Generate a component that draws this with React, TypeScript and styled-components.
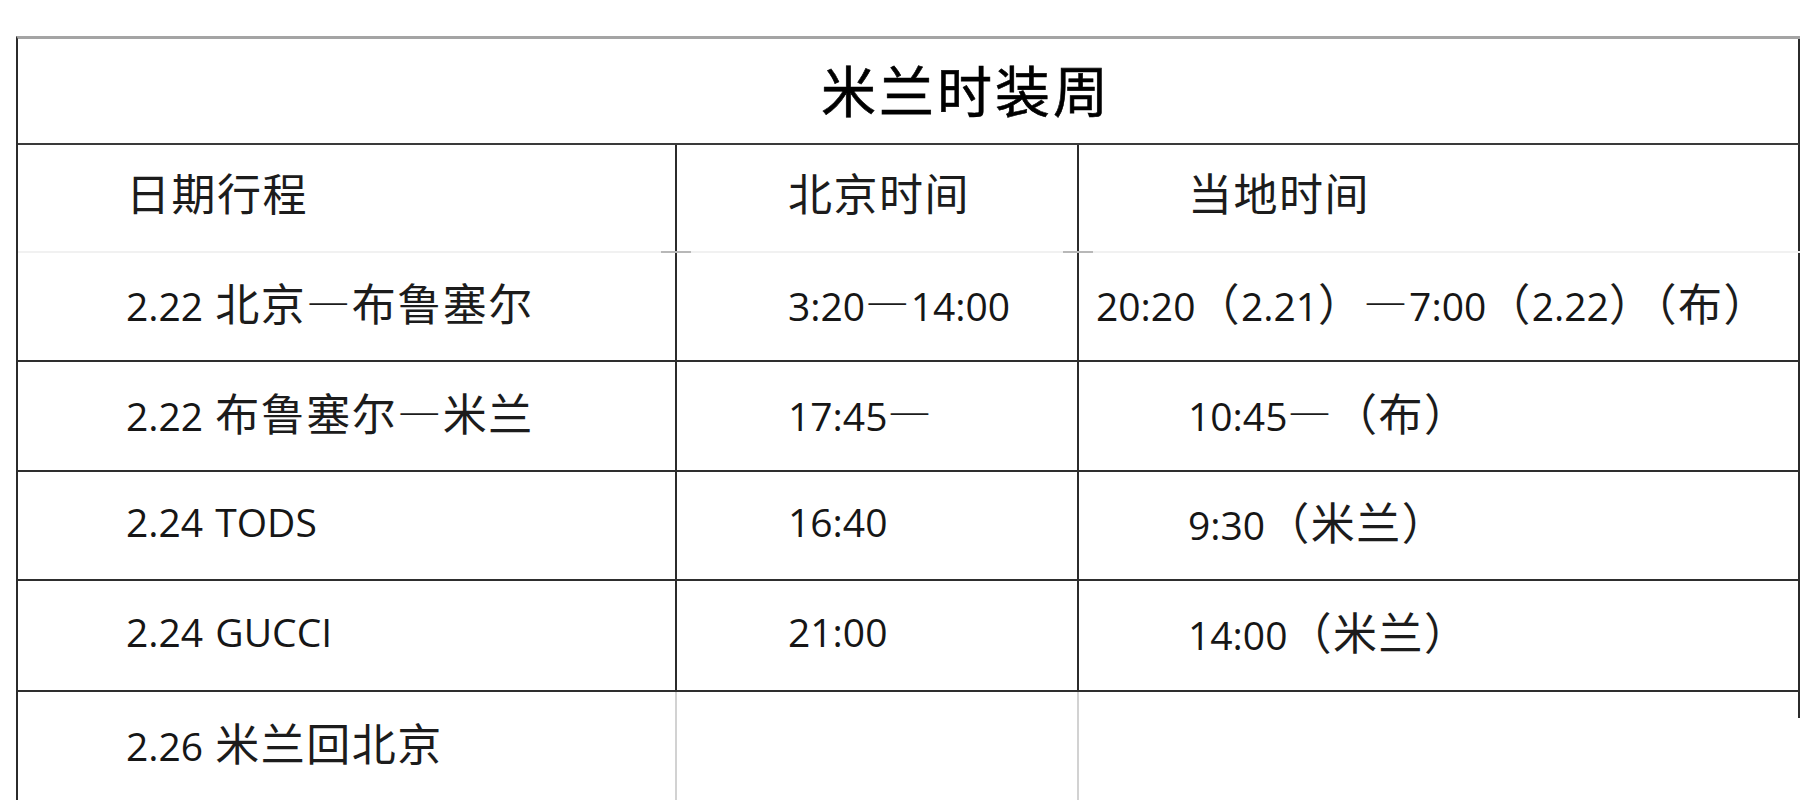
import React from "react";
import styled, { createGlobalStyle } from "styled-components";

const GlobalStyle = createGlobalStyle`
  html, body { margin: 0; padding: 0; background: #ffffff; }
  body { overflow: hidden; }
`;

const Sheet = styled.div`
  width: 1803px;
  height: 800px;
  overflow: hidden;
  padding-top: 36px;
  box-sizing: border-box;
  background: #fff;
`;

const Table = styled.div`
  margin-left: 16px;
  width: 1782px;
  border-top: 3px solid #a4a4a4;
  border-left: 2px solid #2b2b2b;
  font-family: "Open Sans", "Noto Sans CJK SC", sans-serif;
  color: #161616;
`;

const TitleRow = styled.div`
  height: 106px;
  box-sizing: border-box;
  display: flex;
  align-items: center;
  justify-content: center;
  padding-left: 116px;
  padding-bottom: 6px;
  border-bottom: 2px solid #3a3a3a;
  border-right: 2px solid #2b2b2b;
`;

const Title = styled.span`
  font-family: "Noto Sans CJK SC", sans-serif;
  font-size: 55px;
  font-weight: 400;
  letter-spacing: 3px;
  line-height: 1;
  color: #000;
  -webkit-text-stroke: 0.6px #000;
`;

const Row = styled.div<{ $h: number; $faint?: boolean }>`
  display: grid;
  grid-template-columns: 659px 402px 1fr;
  height: ${(p) => p.$h}px;
  box-sizing: border-box;
  border-bottom: 2px solid ${(p) => (p.$faint ? "#f1f1f1" : "#2e2e2e")};
`;

const Cell = styled.div<{ $pad: number; $lift: number; $fade?: boolean; $tick?: boolean; $end?: boolean }>`
  position: relative;
  display: flex;
  align-items: center;
  padding-left: ${(p) => p.$pad}px;
  padding-bottom: ${(p) => p.$lift}px;
  box-sizing: border-box;
  border-right: 2px solid
    ${(p) => (p.$end && p.$fade ? "transparent" : p.$fade ? "#d2d2d2" : "#2b2b2b")};
  font-size: 39px;
  word-spacing: 2px;
  white-space: nowrap;
  line-height: 1;

  ${(p) =>
    p.$tick
      ? `&::after {
          content: "";
          position: absolute;
          right: -16px;
          bottom: -2px;
          width: 30px;
          height: 2px;
          background: #b8b8b8;
        }`
      : ""}

  ${(p) =>
    p.$end && p.$fade
      ? `&::before {
          content: "";
          position: absolute;
          right: -2px;
          top: 0;
          width: 2px;
          height: 26px;
          background: #2b2b2b;
        }`
      : ""}
`;

const Han = styled.span`
  font-family: "Noto Sans CJK SC", sans-serif;
  font-size: 44px;
  letter-spacing: 1.5px;
  word-spacing: 0;
  color: #1c1c1c;
  font-feature-settings: "fwid" 1;
`;

const CJK = /([\u2014\u3000-\u303f\u4e00-\u9fff\uff00-\uffef]+)/;

function Text({ value }: { value: string }) {
  const parts = value.split(CJK).filter((s) => s.length > 0);
  return (
    <span>
      {parts.map((part, i) =>
        CJK.test(part) ? <Han key={i}>{part}</Han> : <React.Fragment key={i}>{part}</React.Fragment>
      )}
    </span>
  );
}

type RowData = {
  h: number;
  cells: [string, string, string];
  indent3?: number;
};

const rows: RowData[] = [
  { h: 109, cells: ["2.22 北京—布鲁塞尔", "3:20—14:00", "20:20（2.21）—7:00（2.22）（布）"], indent3: 17 },
  { h: 110, cells: ["2.22 布鲁塞尔—米兰", "17:45—", "10:45—（布）"] },
  { h: 109, cells: ["2.24 TODS", "16:40", "9:30（米兰）"] },
  { h: 111, cells: ["2.24 GUCCI", "21:00", "14:00（米兰）"] },
  { h: 110, cells: ["2.26 米兰回北京", "", ""] },
];

export default function App() {
  return (
    <>
      <GlobalStyle />
      <Sheet>
        <Table>
          <TitleRow>
            <Title>米兰时装周</Title>
          </TitleRow>
          <Row $h={108} $faint>
            <Cell $pad={108} $lift={12} $tick>
              <Text value="日期行程" />
            </Cell>
            <Cell $pad={111} $lift={12} $tick>
              <Text value="北京时间" />
            </Cell>
            <Cell $pad={109} $lift={12} $end>
              <Text value="当地时间" />
            </Cell>
          </Row>
          {rows.map((r, i) => {
            const fade = i === rows.length - 1;
            return (
              <Row key={i} $h={r.h}>
                <Cell $pad={108} $lift={8} $fade={fade}>
                  <Text value={r.cells[0]} />
                </Cell>
                <Cell $pad={111} $lift={8} $fade={fade}>
                  <Text value={r.cells[1]} />
                </Cell>
                <Cell $pad={r.indent3 ?? 109} $lift={8} $fade={fade} $end>
                  <Text value={r.cells[2]} />
                </Cell>
              </Row>
            );
          })}
        </Table>
      </Sheet>
    </>
  );
}
